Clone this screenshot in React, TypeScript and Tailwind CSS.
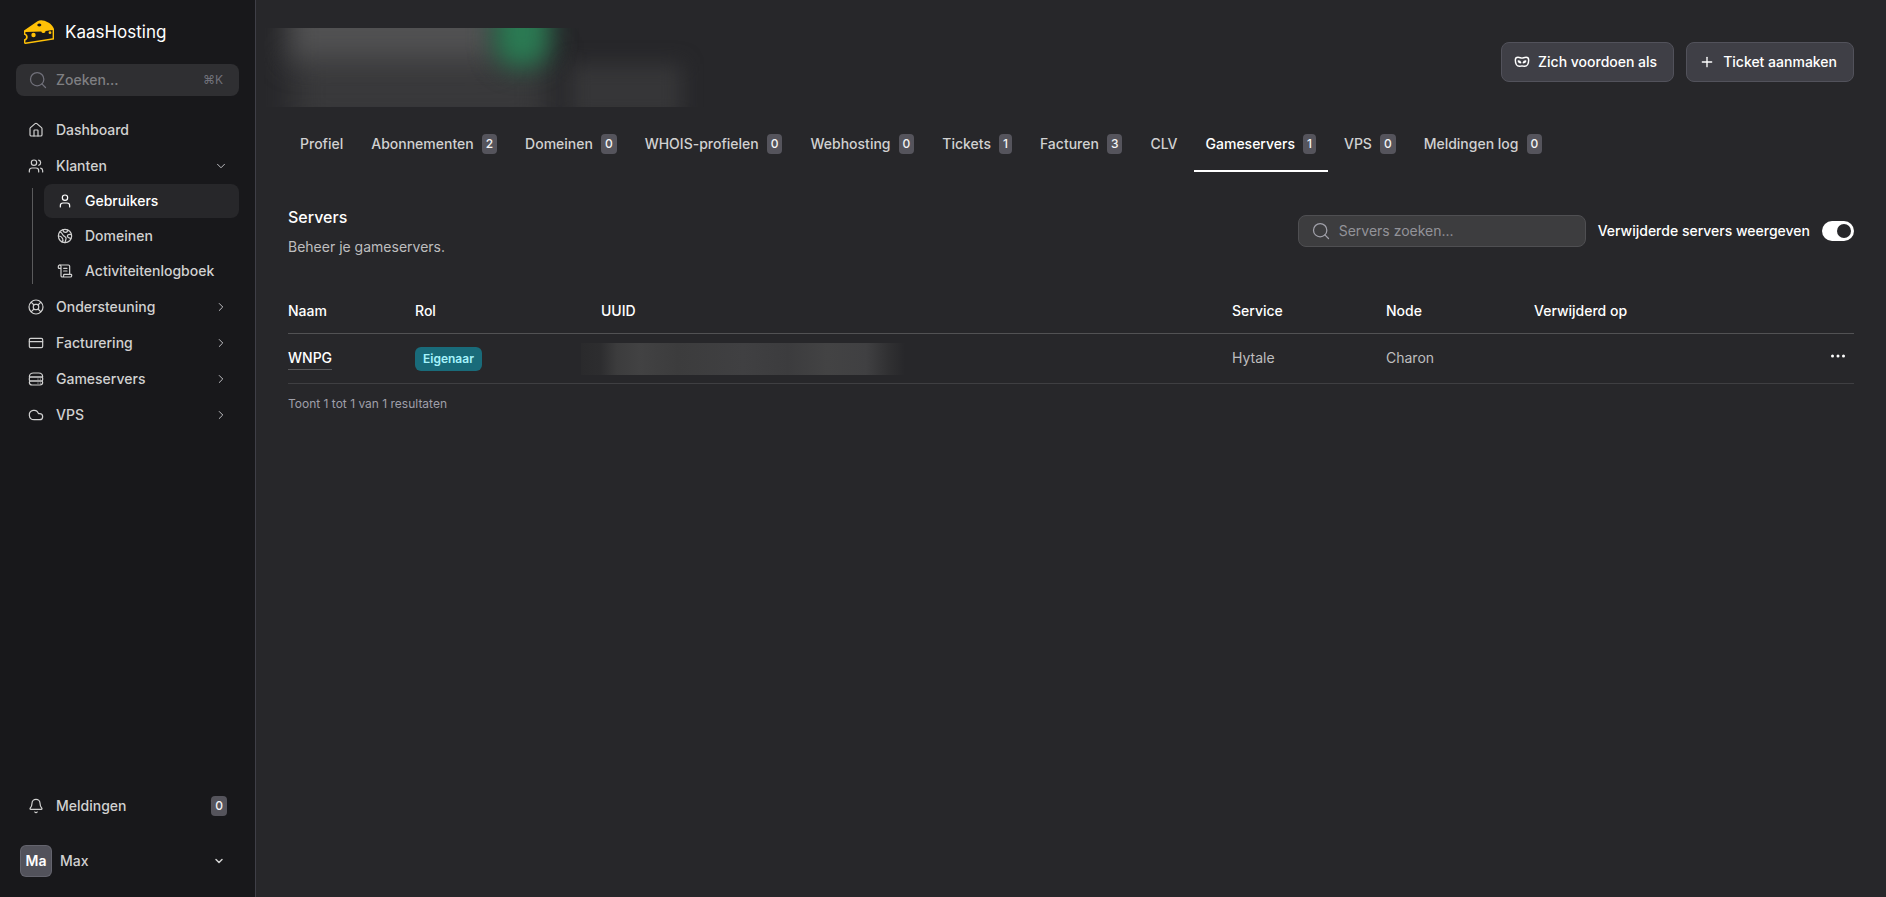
import React, { useState } from 'react';
import {
  Bell,
  ChevronDown,
  ChevronRight,
  Cloud,
  CreditCard,
  House,
  Plus,
  ScrollText,
  Search,
  User,
  Users,
} from 'lucide-react';

const tabs = [
  { label: 'Profiel' },
  { label: 'Abonnementen', count: 2 },
  { label: 'Domeinen', count: 0 },
  { label: 'WHOIS-profielen', count: 0 },
  { label: 'Webhosting', count: 0 },
  { label: 'Tickets', count: 1 },
  { label: 'Facturen', count: 3 },
  { label: 'CLV' },
  { label: 'Gameservers', count: 1 },
  { label: 'VPS', count: 0 },
  { label: 'Meldingen log', count: 0 },
];

const svgProps = {
  viewBox: '0 0 24 24',
  fill: 'none',
  stroke: 'currentColor',
  strokeWidth: 1.8,
  strokeLinecap: 'round' as const,
  strokeLinejoin: 'round' as const,
};

function CheeseLogo() {
  return (
    <svg viewBox="0 0 30 24" className="h-6 w-[30px] shrink-0" aria-hidden="true">
      <path
        fill="#ffc107"
        fillRule="evenodd"
        d="M0 10.6 13.5 1.200C15.500 0 18 0 20.500.8c4.500 1.500 8.500 4.700 9.500 8.200v10.500L1.500 24C.5 24 0 23.400 0 22.500v-3.200c1.300-.3 2-1.200 2-2.300S1.300 15 0 14.700zM15.300 3.600a2 1.500 0 1 0 .01 0zM1.400 12v1.700c1.500.7 2.300 1.800 2.300 3.300 0 1.600-.8 2.900-2.300 3.500v2L28.600 18.300v-8.200l-7 .9a2.200 2.200 0 0 1-4.300.5z"
      />
      <circle cx="9.500" cy="15" r="2.200" fill="#ffc107" />
      <circle cx="26" cy="12.700" r="1.400" fill="#ffc107" />
    </svg>
  );
}

function MaskIcon({ className }: { className?: string }) {
  return (
    <svg {...svgProps} strokeWidth={2.2} className={className}>
      <path d="M2 9c0-2.500 1-4 4-4 2.500 0 4 1.200 6 1.200S15.500 5 18 5c3 0 4 1.500 4 4 0 5.500-2.500 9.500-6 9.500-1.800 0-2.500-.5-4-.5s-2.200.5-4 .5C4.500 18.500 2 14.500 2 9z" />
      <path d="M6.500 10.500c2 0 3 .8 3.500 2.500-2 0-3-.8-3.500-2.500zM17.500 10.500c-2 0-3 .8-3.500 2.500 2 0 3-.8 3.500-2.500z" />
    </svg>
  );
}

function GlobeIcon({ className }: { className?: string }) {
  return (
    <svg {...svgProps} className={className}>
      <circle cx="12" cy="12" r="10" />
      <path d="M4 6c2 0 3 1 4 3s1 3 4 4c2 1 2 3 1 5l-1 4M9 2.500c0 3 2 4 4 4s3-1 3-3.500M21.500 10c-3-1-6 0-6 2s2 3 5 3.500M2.500 12c3 0 5 2 6 4s0 4-1 5" />
    </svg>
  );
}

function SupportIcon({ className }: { className?: string }) {
  return (
    <svg {...svgProps} className={className}>
      <circle cx="12" cy="12" r="10.500" />
      <rect x="8" y="8" width="8" height="8" rx="2.500" />
      <path d="m5 5 4 4M19 5l-4 4M5 19l4-4M19 19l-4-4" />
    </svg>
  );
}

function ServerStackIcon({ className }: { className?: string }) {
  return (
    <svg {...svgProps} className={className}>
      <path d="M2 9c0-4 3-6 6-6h8c3 0 6 2 6 6z" />
      <rect x="2" y="9" width="20" height="6" rx="2" />
      <path d="M2 17c0-1 1-2 2-2h16c1 0 2 1 2 2 0 3-2 4-4 4H6c-2 0-4-1-4-4zM15 12h.01M18.500 12h.01M15 18h.01M18.500 18h.01" />
    </svg>
  );
}

function DotsIcon({ className }: { className?: string }) {
  return (
    <svg viewBox="0 0 16 16" fill="currentColor" className={className}>
      <circle cx="2.500" cy="8" r="1.500" />
      <circle cx="8" cy="8" r="1.500" />
      <circle cx="13.500" cy="8" r="1.500" />
    </svg>
  );
}

function Count({ children }: { children: React.ReactNode }) {
  return (
    <span className="rounded-sm bg-[#55545c] px-1 text-xs leading-5 font-medium text-zinc-100">
      {children}
    </span>
  );
}

interface NavItemProps {
  icon: React.ElementType;
  label: string;
  trailing?: React.ReactNode;
}

function NavItem({ icon: Icon, label, trailing }: NavItemProps) {
  return (
    <a href="#" className="flex h-[34px] items-center gap-3 px-3 hover:text-white">
      <Icon className="size-4 shrink-0" strokeWidth={1.8} />
      <span className="flex-1">{label}</span>
      {trailing}
    </a>
  );
}

function SubItem({ icon: Icon, label, active }: NavItemProps & { active?: boolean }) {
  return (
    <a
      href="#"
      className={`flex h-[34px] items-center gap-3 rounded-lg px-[13px] ${
        active ? 'bg-[#27272a] text-white' : 'hover:text-white'
      }`}
    >
      <Icon className="size-4 shrink-0" strokeWidth={1.8} />
      <span>{label}</span>
    </a>
  );
}

const arrow = <ChevronRight className="-mr-px size-[14px] text-zinc-300" strokeWidth={1.5} />;

function Sidebar() {
  return (
    <aside className="flex w-64 shrink-0 flex-col border-r border-zinc-700 bg-zinc-900 px-4 text-sm font-medium text-[#d1d1d1]">
      <a href="#" className="flex h-16 items-center gap-[11px] px-2 text-[17px] font-normal text-white">
        <CheeseLogo />
        KaasHosting
      </a>

      <label className="flex h-8 items-center gap-2 rounded-lg bg-[#2f2f32] px-3 text-zinc-500">
        <Search className="size-5 shrink-0" strokeWidth={1.5} />
        <input
          type="search"
          aria-label="Zoeken"
          placeholder="Zoeken..."
          className="w-0 flex-1 bg-transparent outline-none placeholder:text-[#7f7f82]"
        />
        <kbd className="pr-1 font-[Inter] text-xs font-normal">⌘K</kbd>
      </label>

      <nav className="mt-[17px] flex flex-col gap-[2px]">
        <NavItem icon={House} label="Dashboard" />
        <NavItem
          icon={Users}
          label="Klanten"
          trailing={<ChevronDown className="-mr-px size-[14px] text-zinc-300" strokeWidth={1.5} />}
        />
        <div className="-mt-px flex">
          <div className="my-1 ml-4 w-px bg-[#5a5a5c]" />
          <div className="ml-[11px] flex flex-1 flex-col gap-px">
            <SubItem icon={User} label="Gebruikers" active />
            <SubItem icon={GlobeIcon} label="Domeinen" />
            <SubItem icon={ScrollText} label="Activiteitenlogboek" />
          </div>
        </div>
        <NavItem icon={SupportIcon} label="Ondersteuning" trailing={arrow} />
        <NavItem icon={CreditCard} label="Facturering" trailing={arrow} />
        <NavItem icon={ServerStackIcon} label="Gameservers" trailing={arrow} />
        <NavItem icon={Cloud} label="VPS" trailing={arrow} />
      </nav>

      <div className="mt-auto pb-4">
        <NavItem icon={Bell} label="Meldingen" trailing={<Count>0</Count>} />
        <button type="button" className="mt-[18px] flex h-10 w-full items-center gap-2 px-1 text-left">
          <span className="flex size-8 items-center justify-center rounded-md border border-zinc-500/60 bg-[#52525b] font-semibold text-white">
            Ma
          </span>
          <span className="flex-1">Max</span>
          <ChevronDown className="mr-2 size-4 p-[2px]" strokeWidth={3} />
        </button>
      </div>
    </aside>
  );
}

/* Personal details are hidden behind a soft smudge */
function HiddenIdentity() {
  return (
    <div className="relative h-[79px] w-[440px] overflow-hidden" aria-hidden="true">
      <div className="absolute top-6 left-7 h-20 w-[256px] bg-[#39393b] blur-lg" />
      <div className="absolute -top-10 left-6 h-[74px] w-[210px] bg-[#515152] blur-[14px]" />
      <div className="absolute -top-8 left-[230px] h-[72px] w-[56px] rounded-b-3xl bg-[#2b7a53] blur-[12px]" />
      <div className="absolute top-9 left-[306px] h-14 w-[112px] bg-[#363638] blur-[10px]" />
    </div>
  );
}

function ServersTable() {
  return (
    <table className="w-full table-fixed text-left text-sm text-[#bebebf]">
      <colgroup>
        <col className="w-[115px]" />
        <col className="w-[186px]" />
        <col />
        <col className="w-[154px]" />
        <col className="w-[148px]" />
        <col className="w-[252px]" />
        <col className="w-20" />
      </colgroup>
      <thead className="text-white">
        <tr className="h-11 border-b border-[#525254]">
          <th className="font-medium">Naam</th>
          <th className="px-3 font-medium">Rol</th>
          <th className="px-3 font-medium">UUID</th>
          <th className="px-3 font-medium">Service</th>
          <th className="px-3 font-medium">Node</th>
          <th className="px-3 font-medium">Verwijderd op</th>
          <th aria-label="Acties" />
        </tr>
      </thead>
      <tbody>
        <tr className="h-[50px] border-b border-[#3f3f42]">
          <td>
            <a href="#" className="border-b border-[#5a5a5c] pb-[3px] font-medium text-white">
              WNPG
            </a>
          </td>
          <td className="px-3 pt-[2px]">
            <span className="inline-block rounded-md bg-[#196b7a] px-2 text-xs leading-6 font-semibold text-[#a5f3fc]">
              Eigenaar
            </span>
          </td>
          <td className="px-3 pt-[2px]">
            <div
              className="-ml-5 h-8 w-[324px] bg-[linear-gradient(90deg,#2a2a2c_0%,#2d2d2f_6%,#3c3c3d_11%,#424243_18%,#3c3c3d_30%,#404042_50%,#3c3c3e_64%,#434344_76%,#404042_88%,#303032_95%,#27272a_100%)]"
              aria-hidden="true"
            />
          </td>
          <td className="px-3">Hytale</td>
          <td className="px-3">Charon</td>
          <td className="px-3" />
          <td className="pb-[6px] text-right">
            <button type="button" aria-label="Meer" className="px-2 align-middle text-white">
              <DotsIcon className="size-4" />
            </button>
          </td>
        </tr>
      </tbody>
    </table>
  );
}

export default function App() {
  const [activeTab, setActiveTab] = useState('Gameservers');
  const [showDeleted, setShowDeleted] = useState(true);

  return (
    <div className="flex min-h-screen bg-[#27272a] font-[Inter,sans-serif] text-sm text-white">
      <Sidebar />

      <main className="min-w-0 flex-1 px-8">
        <header className="flex items-start justify-between pt-7">
          <div className="-ml-6">
            <HiddenIdentity />
          </div>
          <div className="mt-[14px] flex gap-3 font-medium">
            <button
              type="button"
              className="flex h-10 items-center gap-2 rounded-lg border border-[#52525b] bg-[#3f3f46] pr-4 pl-3"
            >
              <MaskIcon className="size-4" />
              Zich voordoen als
            </button>
            <button
              type="button"
              className="flex h-10 items-center gap-2 rounded-lg border border-[#52525b] bg-[#3f3f46] pr-4 pl-3"
            >
              <Plus className="size-4" />
              Ticket aanmaken
            </button>
          </div>
        </header>

        <div role="tablist" className="mt-[17px] flex gap-1">
          {tabs.map(({ label, count }) => (
            <button
              key={label}
              type="button"
              role="tab"
              aria-selected={label === activeTab}
              onClick={() => setActiveTab(label)}
              className={`flex h-12 items-start gap-2 border-b-2 px-3 pt-[10px] font-medium whitespace-nowrap ${
                label === activeTab ? 'border-white text-white' : 'border-transparent text-[#d1d1d1]'
              }`}
            >
              {label}
              {count !== undefined && <Count>{count}</Count>}
            </button>
          ))}
        </div>

        <section className="mt-[33px]">
          <div className="flex items-center justify-between">
            <div>
              <h2 className="text-base font-medium">Servers</h2>
              <p className="mt-2 text-[#bebebf]">Beheer je gameservers.</p>
            </div>
            <div className="flex items-center gap-3">
              <label className="flex h-8 w-72 items-center gap-2 rounded-lg border border-[#4f4f52] bg-[#3d3d3f] px-3 text-[#a1a1aa]">
                <Search className="size-5 shrink-0" strokeWidth={1.5} />
                <input
                  type="search"
                  aria-label="Servers zoeken"
                  placeholder="Servers zoeken..."
                  className="w-0 flex-1 bg-transparent outline-none placeholder:text-[#939399]"
                />
              </label>
              <label htmlFor="show-deleted" className="font-medium">
                Verwijderde servers weergeven
              </label>
              <input
                id="show-deleted"
                type="checkbox"
                role="switch"
                checked={showDeleted}
                onChange={(e) => setShowDeleted(e.target.checked)}
                className="h-5 w-8 appearance-none rounded-full bg-zinc-600 p-[3px] before:block before:size-[14px] before:rounded-full before:bg-[#27272a] checked:bg-white checked:before:ml-3"
              />
            </div>
          </div>

          <div className="mt-8">
            <ServersTable />
          </div>
          <p className="mt-3 text-xs text-zinc-400">Toont 1 tot 1 van 1 resultaten</p>
        </section>
      </main>
    </div>
  );
}
